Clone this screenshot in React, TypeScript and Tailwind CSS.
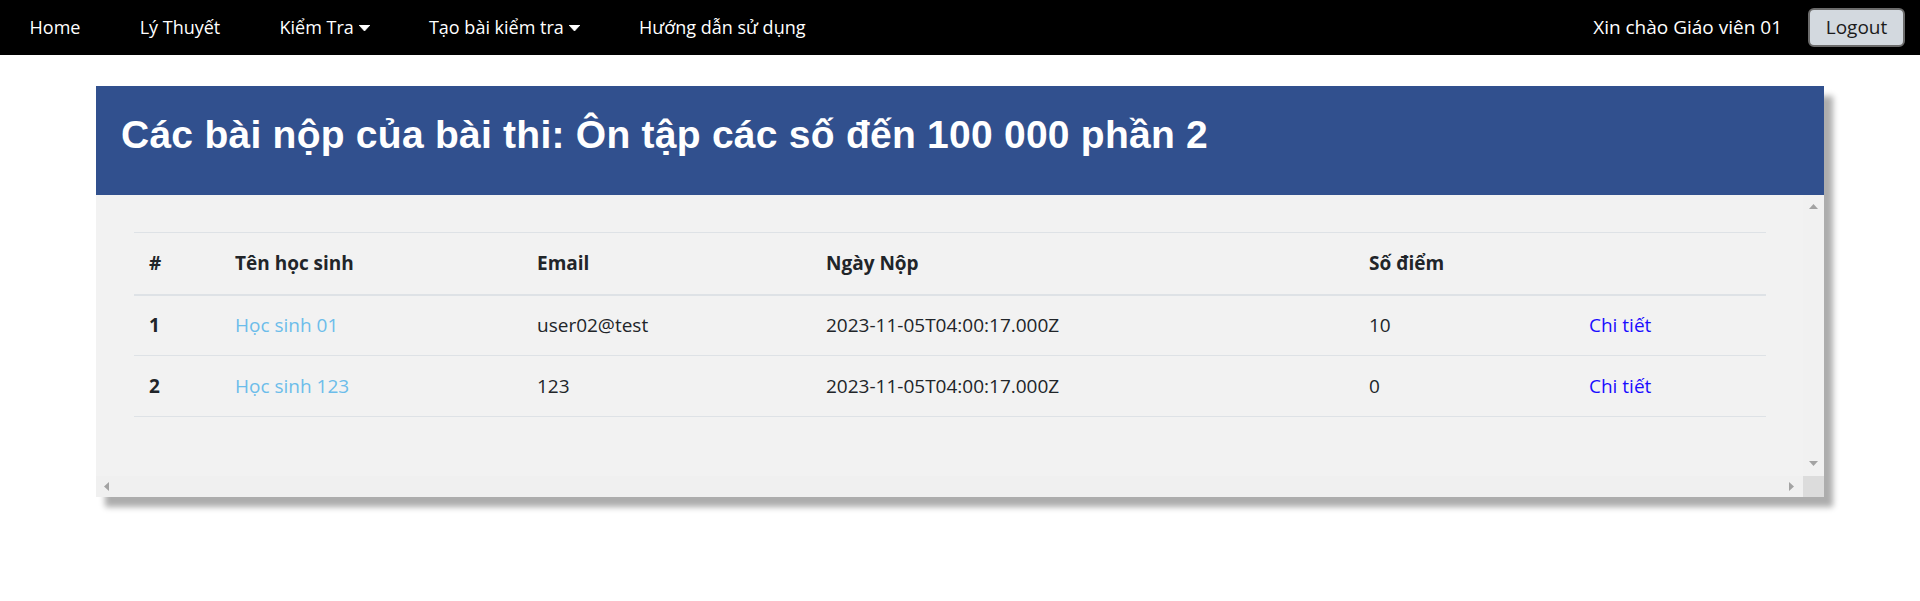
import React from "react";

const rows = [
  { id: 1, name: "Học sinh 01", email: "user02@test", date: "2023-11-05T04:00:17.000Z", score: "10" },
  { id: 2, name: "Học sinh 123", email: "123", date: "2023-11-05T04:00:17.000Z", score: "0" },
];

function Caret() {
  return (
    <svg width="11" height="6" viewBox="0 0 11 6" className="ml-[5px] inline-block">
      <polygon points="0,0 11,0 5.5,6" fill="white" strokeLinejoin="round" stroke="white" strokeWidth="0.8" />
    </svg>
  );
}

function Arrow({ dir }: { dir: "up" | "down" | "left" | "right" }) {
  const pts =
    dir === "up"
      ? "0,5 9,5 4.5,0"
      : dir === "down"
      ? "0,0 9,0 4.5,5"
      : dir === "left"
      ? "5,0 5,9 0,4.5"
      : "0,0 0,9 5,4.5";
  const w = dir === "up" || dir === "down" ? 9 : 5;
  const h = dir === "up" || dir === "down" ? 5 : 9;
  return (
    <svg width={w} height={h} viewBox={`0 0 ${w} ${h}`}>
      <polygon points={pts} fill="#a3a3a3" />
    </svg>
  );
}

export default function App() {
  const navItems = [
    { label: "Home" },
    { label: "Lý Thuyết" },
    { label: "Kiểm Tra", caret: true },
    { label: "Tạo bài kiểm tra", caret: true },
    { label: "Hướng dẫn sử dụng" },
  ];
  return (
    <div className="min-h-[601px] bg-white font-['Open_Sans','Noto_Sans',sans-serif]">
      <nav className="flex h-[55px] items-center justify-between bg-black text-[18px] text-white">
        <div className="flex items-center">
          {navItems.map((it) => (
            <div key={it.label} className="flex items-center px-[29.6px]">
              <span>{it.label}</span>
              {it.caret && <Caret />}
            </div>
          ))}
        </div>
        <div className="flex items-center pr-[15px]">
          <span className="text-[19px]">Xin chào Giáo viên 01</span>
          <button className="ml-[26px] h-[39px] w-[97px] rounded-[6px] border-2 border-[#6b6b6b] bg-[#d3d9df] text-[19px] text-[#1b1b1b]">
            Logout
          </button>
        </div>
      </nav>

      <div className="pt-[31px]">
        <div className="mx-auto w-[1728px] shadow-[9px_10px_6px_#adadad]">
          <div className="flex h-[109px] items-center bg-[#31508e] pb-[10px] pl-[25px]">
            <h1 className="font-['Liberation_Sans',Arial,sans-serif] text-[39px] font-bold tracking-[0.25px] text-white">
              Các bài nộp của bài thi: Ôn tập các số đến 100 000 phần 2
            </h1>
          </div>
          <div className="grid h-[302px] grid-cols-[1fr_21px] grid-rows-[281px_21px] bg-[#f2f2f2]">
            <div className="overflow-hidden pl-[38px] pr-[37px] pt-[37px]">
              <table className="w-full border-collapse text-left text-[19px] leading-[30px] text-[#212529]">
                <colgroup>
                  <col className="w-[86px]" />
                  <col className="w-[302px]" />
                  <col className="w-[289px]" />
                  <col className="w-[543px]" />
                  <col className="w-[220px]" />
                  <col />
                </colgroup>
                <thead>
                  <tr className="h-[62px] border-t border-b-2 border-[#dee2e6]">
                    <th className="px-[15px] font-bold">#</th>
                    <th className="px-[15px] font-bold">Tên học sinh</th>
                    <th className="px-[15px] font-bold">Email</th>
                    <th className="px-[15px] font-bold">Ngày Nộp</th>
                    <th className="px-[15px] font-bold">Số điểm</th>
                    <th className="px-[15px]"></th>
                  </tr>
                </thead>
                <tbody>
                  {rows.map((r) => (
                    <tr key={r.id} className="h-[61px] border-b border-[#dee2e6]">
                      <td className="px-[15px] font-bold">{r.id}</td>
                      <td className="px-[15px] text-[#6cbdea]">{r.name}</td>
                      <td className="px-[15px]">{r.email}</td>
                      <td className="px-[15px]">{r.date}</td>
                      <td className="px-[15px]">{r.score}</td>
                      <td className="px-[15px] text-[#1a0dff]">Chi tiết</td>
                    </tr>
                  ))}
                </tbody>
              </table>
            </div>
            <div className="flex flex-col items-center justify-between bg-[#f1f1f1] pb-[10px] pt-[9px]">
              <Arrow dir="up" />
              <Arrow dir="down" />
            </div>
            <div className="flex items-center justify-between bg-[#f0f0f0] pl-[8px] pr-[9px]">
              <Arrow dir="left" />
              <Arrow dir="right" />
            </div>
            <div className="bg-[#dcdcdc]" />
          </div>
        </div>
      </div>
    </div>
  );
}
